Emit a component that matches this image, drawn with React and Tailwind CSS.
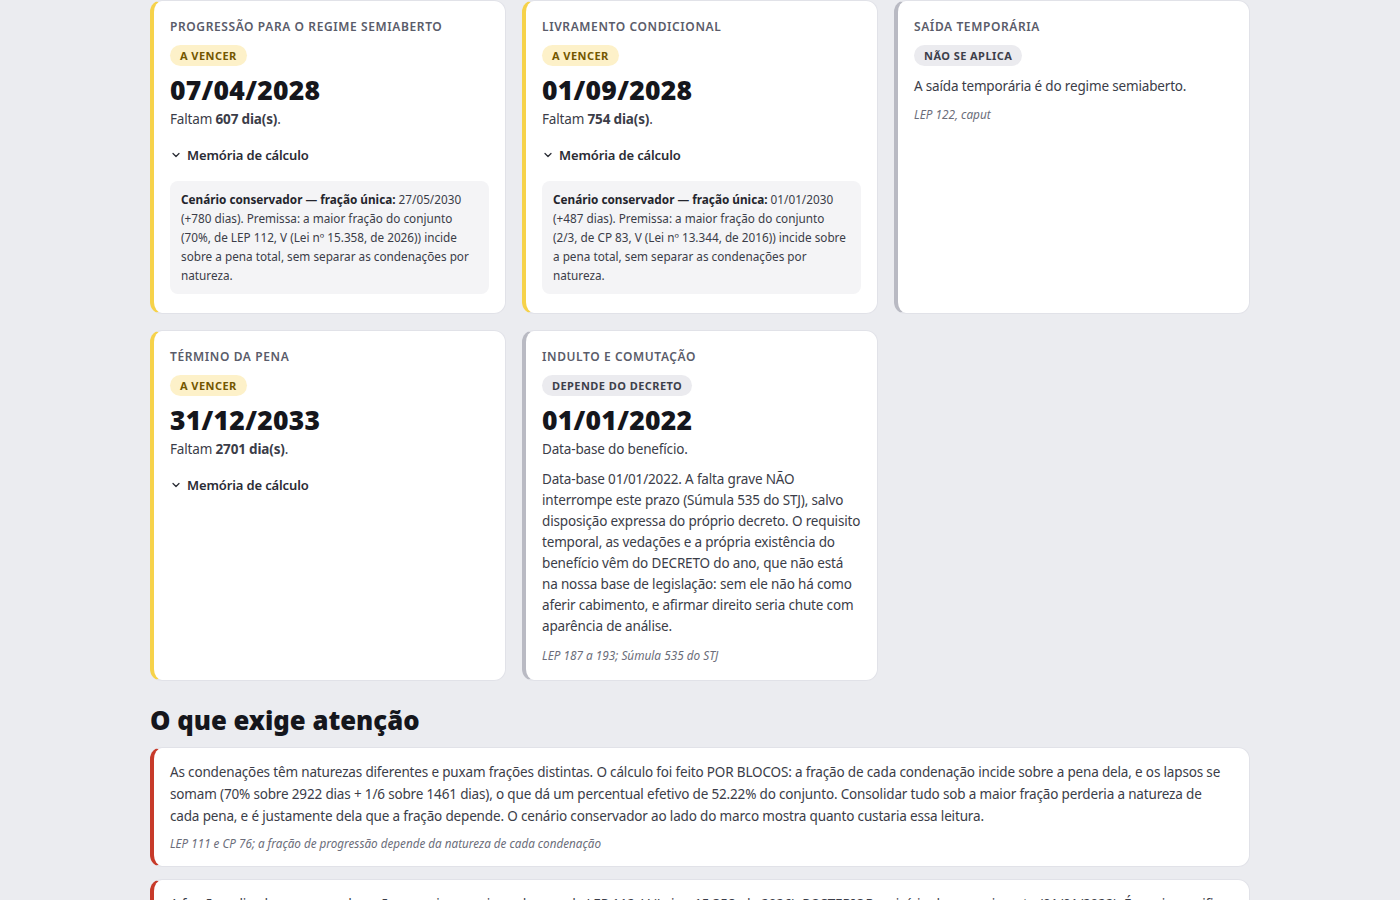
import { ChevronDown } from 'lucide-react';

const font = { fontFamily: '"Noto Sans", "Open Sans", Arial, sans-serif' };

const marcos = [
    {
        titulo: 'Progressão para o regime semiaberto',
        status: 'vencer',
        data: '07/04/2028',
        dias: 607,
        memoria: {
            data: '27/05/2030',
            texto: '(+780 dias). Premissa: a maior fração do conjunto (70%, de LEP 112, V (Lei nº 15.358, de 2026)) incide sobre a pena total, sem separar as condenações por natureza.',
        },
    },
    {
        titulo: 'Livramento condicional',
        status: 'vencer',
        data: '01/09/2028',
        dias: 754,
        memoria: {
            data: '01/01/2030',
            texto: '(+487 dias). Premissa: a maior fração do conjunto (2/3, de CP 83, V (Lei nº 13.344, de 2016)) incide sobre a pena total, sem separar as condenações por natureza.',
        },
    },
    {
        titulo: 'Saída temporária',
        status: 'na',
        texto: 'A saída temporária é do regime semiaberto.',
        base: 'LEP 122, caput',
    },
    {
        titulo: 'Término da pena',
        status: 'vencer',
        data: '31/12/2033',
        dias: 2701,
    },
    {
        titulo: 'Indulto e comutação',
        status: 'decreto',
        data: '01/01/2022',
        sub: 'Data-base do benefício.',
        texto: 'Data-base 01/01/2022. A falta grave NÃO interrompe este prazo (Súmula 535 do STJ), salvo disposição expressa do próprio decreto. O requisito temporal, as vedações e a própria existência do benefício vêm do DECRETO do ano, que não está na nossa base de legislação: sem ele não há como aferir cabimento, e afirmar direito seria chute com aparência de análise.',
        base: 'LEP 187 a 193; Súmula 535 do STJ',
    },
];

const alertas = [
    {
        texto: 'As condenações têm naturezas diferentes e puxam frações distintas. O cálculo foi feito POR BLOCOS: a fração de cada condenação incide sobre a pena dela, e os lapsos se somam (70% sobre 2922 dias + 1/6 sobre 1461 dias), o que dá um percentual efetivo de 52.22% do conjunto. Consolidar tudo sob a maior fração perderia a natureza de cada pena, e é justamente dela que a fração depende. O cenário conservador ao lado do marco mostra quanto custaria essa leitura.',
        base: 'LEP 111 e CP 76; a fração de progressão depende da natureza de cada condenação',
    },
    {
        texto: 'A fração aplicada a uma condenação por crime equiparado vem da LEP 112, V (Lei nº 15.358, de 2026), POSTERIOR ao início do cumprimento (01/01/2022). É preciso verificar se a lei nova é mais gravosa e, sendo, aplicar a fração vigente à época do fato.',
        base: 'CF 5º, XL; irretroatividade da lei penal mais gravosa',
    },
];

// texto corrido: um pouco menor que 14px para bater com a largura do original
const corpo = 'text-[13.5px] tracking-[-0.012em] text-[#3b3d48]';

function Badge({ status }) {
    if (status === 'vencer') {
        return (
            <span className="inline-block rounded-full bg-[#fdf1c9] px-2.5 py-[2.5px] text-[11px] font-bold uppercase leading-4 tracking-[0.04em] text-[#735700]">
                A vencer
            </span>
        );
    }
    const label = status === 'na' ? 'Não se aplica' : 'Depende do decreto';
    return (
        <span className="inline-block rounded-full bg-[#ebebef] px-2.5 py-[2.5px] text-[11px] font-bold uppercase leading-4 tracking-[0.04em] text-[#3d3f4b]">
            {label}
        </span>
    );
}

function MarcoCard({ marco }) {
    const borda = marco.status === 'vencer' ? 'border-l-[#f6d24a]' : 'border-l-[#b9bac3]';
    return (
        <div className={`rounded-xl border border-[#e1e2e8] border-l-4 ${borda} bg-white px-4 pt-[18px] pb-[17px]`}>
            <h3 className="text-[12px] font-semibold uppercase leading-4 tracking-[0.05em] text-[#5a5c6a]">{marco.titulo}</h3>
            <div className="mt-2.5 flex">
                <Badge status={marco.status} />
            </div>

            {marco.data && (
                <p className="mt-2 text-[26.5px] font-black leading-8 tracking-[0.01em] text-[#15161c]">{marco.data}</p>
            )}

            {marco.dias !== undefined && (
                <p className={`mt-[3px] leading-5 ${corpo}`}>
                    Faltam <span className="font-bold">{marco.dias} dia(s)</span>.
                </p>
            )}

            {marco.sub && <p className={`mt-[3px] leading-5 ${corpo}`}>{marco.sub}</p>}

            {marco.status === 'na' && <p className={`mt-2.5 leading-5 ${corpo}`}>{marco.texto}</p>}

            {marco.status === 'decreto' && (
                <p className={`mt-[10px] leading-[21px] ${corpo}`}>{marco.texto}</p>
            )}

            {marco.base && (
                <p className="mt-[10px] text-[11.8px] italic leading-4 text-[#6b6d7a]">{marco.base}</p>
            )}

            {marco.dias !== undefined && (
                <details open={!!marco.memoria} className="mt-4 mb-[2px]">
                    <summary className="flex cursor-pointer list-none items-center gap-[5px] text-[13px] font-semibold leading-5 tracking-[-0.01em] text-[#2a2c35]">
                        <ChevronDown size={12} strokeWidth={2.5} />
                        Memória de cálculo
                    </summary>
                    {marco.memoria && (
                        <div className="mt-4 rounded-lg bg-[#f4f4f6] px-[11px] py-[9px] text-[11.75px] leading-[19px] text-[#3b3d48]">
                            <span className="font-bold text-[#24252d]">Cenário conservador — fração única:</span>{' '}
                            {marco.memoria.data} {marco.memoria.texto}
                        </div>
                    )}
                </details>
            )}
        </div>
    );
}

export default function App() {
    return (
        <div className="min-h-screen bg-[#ebecf0]" style={font}>
            <div className="mx-auto w-[1100px]">
                <div className="grid grid-cols-3 gap-4">
                    {marcos.map((m) => (
                        <MarcoCard key={m.titulo} marco={m} />
                    ))}
                </div>

                <h2 className="mt-6 text-[25.7px] font-black leading-8 text-[#15161c]">O que exige atenção</h2>

                <div className="mt-[10px] space-y-3 pb-10">
                    {alertas.map((a, i) => (
                        <div key={i} className="rounded-xl border border-[#e1e2e8] border-l-4 border-l-[#c73a2a] bg-white px-4 pt-[13px] pb-[14px]">
                            <p className={`leading-[22px] ${corpo}`}>{a.texto}</p>
                            <p className="mt-[7px] text-[11.7px] italic leading-[18px] text-[#6b6d7a]">{a.base}</p>
                        </div>
                    ))}
                </div>
            </div>
        </div>
    );
}
